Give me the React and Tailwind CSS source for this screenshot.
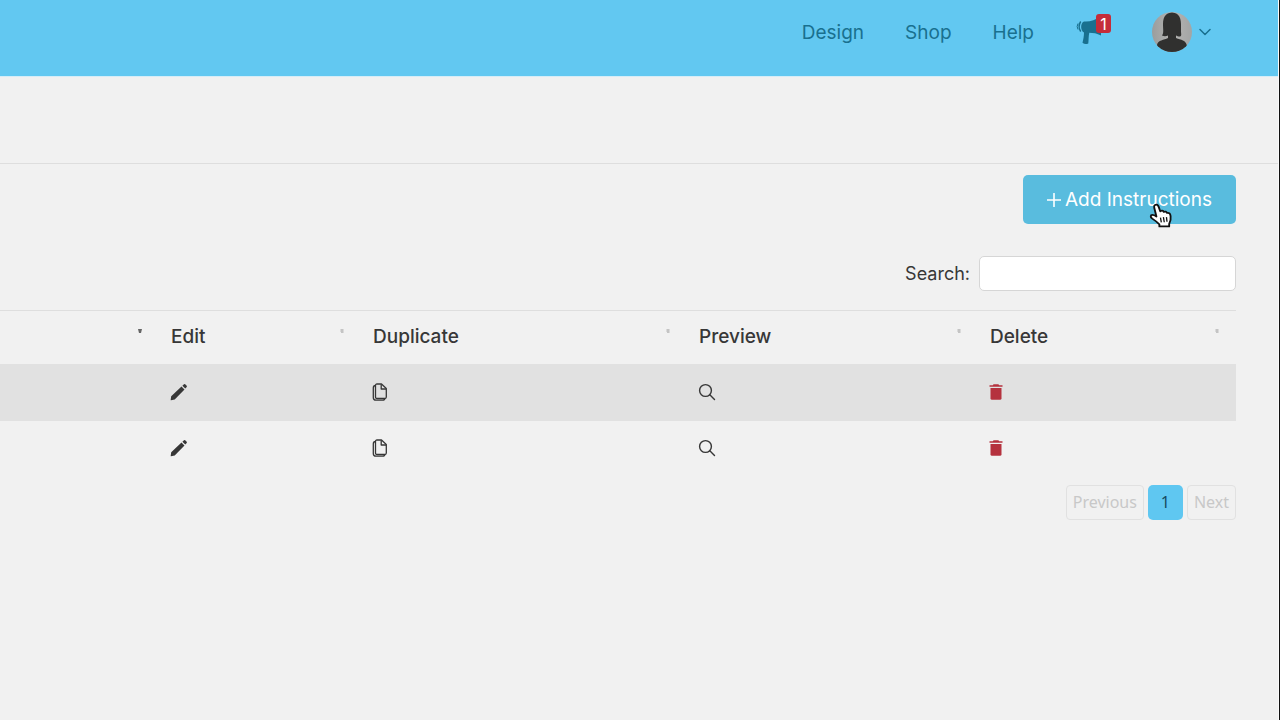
const columns = ["Edit", "Duplicate", "Preview", "Delete"];

function Megaphone() {
  return (
    <svg viewBox="0 0 30 30" className="h-[30px] w-[30px]" fill="#19708f" aria-hidden="true">
      <path d="M8 5.500C13.500 6 19 4.500 25 0V19.500C21 17.500 17 16.800 13.300 16.800C12.500 20 12.700 24 12.300 27.500Q9 29 6.500 26.800C7.300 23.500 8 20 8 16.500C4.500 15 4 7 8 5.500Z" />
      <path d="M4.700 5.500Q1.500 10.500 4.700 15.500" fill="none" stroke="#19708f" strokeWidth="1.500" />
      <path d="M2 7.500Q0.300 10.500 2 13.500" fill="none" stroke="#19708f" strokeWidth="1" />
    </svg>
  );
}

function Avatar() {
  return (
    <svg viewBox="0 0 40 40" className="size-10 rounded-full" aria-hidden="true">
      <defs>
        <linearGradient id="avatar-bg" x1="0" y1="0" x2="1" y2="0">
          <stop offset="0" stopColor="#9a9d9d" />
          <stop offset="0.500" stopColor="#b5b4b2" />
          <stop offset="1" stopColor="#a3a5a5" />
        </linearGradient>
      </defs>
      <rect width="40" height="40" fill="url(#avatar-bg)" />
      <path
        d="M11 12C11 4 15 .5 20 .5S29 4 29 12V19C29 22 30 24 28 24.500C26 24.500 25 24 24 23.500V26C29 28 34 28 35 34L35 40H5V33C6 28 12 28 16 26V23.500C14 24.500 12 24.500 10 23.500C12 21 11 18 11 12Z"
        fill="#30302f"
      />
    </svg>
  );
}

function PencilIcon() {
  return (
    <svg viewBox="0 0 18 18" className="size-[18px]" fill="currentColor" aria-hidden="true">
      <path d="M1.200 13.200L11.500 3.500L14.500 6.500L4.700 16.500L1 17.200Q.6 17.200 .7 16.700Z" />
      <path d="M12.400 2.700L14 1.200Q14.600 .8 15.200 1.300L16.700 2.800Q17.200 3.400 16.700 4L15.300 5.600Z" />
    </svg>
  );
}

function TrashIcon() {
  return (
    <svg viewBox="0 0 14 18" className="h-[18px] w-[14px]" fill="currentColor" aria-hidden="true">
      <path d="M.5 2.300H3.800L4.600 1.300H9.400L10.200 2.300H13.500V3.700H.5Z" />
      <path d="M1.500 5H12.500V15.300Q12.500 16.800 11 16.800H3Q1.500 16.800 1.500 15.300Z" />
    </svg>
  );
}

function CopyIcon() {
  return (
    <svg viewBox="0 0 16 18" className="h-[18px] w-4" fill="none" stroke="currentColor" strokeWidth="1.300" strokeLinejoin="round" aria-hidden="true">
      <path d="M5 1H9.500L14.300 5.500V14Q14.300 15.500 12.800 15.500H5Q3.500 15.500 3.500 14V2.500Q3.500 1 5 1Z" />
      <path d="M9.200 1.200V6H14" />
      <path d="M3.500 2.500Q1.300 2.500 1.300 5V14.500Q1.300 17.200 4 17.200H10.500Q12.800 17.200 12.800 15.500" />
    </svg>
  );
}

function SearchIcon() {
  return (
    <svg viewBox="0 0 18 18" className="size-[18px]" fill="none" stroke="currentColor" strokeWidth="1.400" strokeLinecap="round" aria-hidden="true">
      <circle cx="7.500" cy="7.500" r="5.900" />
      <path d="M11.800 11.800L16.500 16.500" />
    </svg>
  );
}

function HandCursor() {
  return (
    <svg viewBox="0 0 22 24" preserveAspectRatio="none" className="pointer-events-none absolute top-[39px] right-[63px] h-[25px] w-6" aria-hidden="true">
      <path
        d="M5.500 2C7 1 8.300 2 8.800 3.500L10.300 8C11.500 7 13 7.300 13.500 8.500C15 7.800 16 8.300 16.500 9.500C18.500 9 19.500 10.500 19.800 12.500C20.300 16 19.500 18 18.500 20V22.500H9.500V20.500C7.500 18.500 6 17 3 15C1 13.500 1.300 11.500 3 11.500C4.500 11.500 5.500 12 6.800 13L4.800 4.500C4.500 3.300 4.700 2.500 5.500 2Z"
        fill="#fff"
        stroke="#111"
        strokeWidth="1.700"
        strokeLinejoin="round"
      />
      <path d="M10.500 14L11.300 18.500M13.200 13.500L14 18.500M16 13.500L16.500 18" stroke="#111" strokeWidth="1.200" />
    </svg>
  );
}

function SortMark({ active }) {
  return (
    <svg viewBox="0 0 4 6" className="mb-3 h-[6px] w-1" aria-hidden="true">
      {active ? <path d="M0 1H4L3 5H1Z" fill="#666" /> : <path d="M.5 1H3.500V5H1V4H.5Z" fill="#c4c4c4" />}
    </svg>
  );
}

function HeaderCell({ label, active }) {
  return (
    <th scope="col" className="h-[53px] pr-[17px] pl-3 text-left font-medium">
      <div className="flex items-center justify-between">
        <span>{label}</span>
        <SortMark active={active} />
      </div>
    </th>
  );
}

function Row({ shaded }) {
  return (
    <tr className={shaded ? "h-[57px] bg-[#e1e1e1]" : "h-[54px]"}>
      <td />
      <td className="pl-[11px]">
        <button type="button" aria-label="Edit" className="block"><PencilIcon /></button>
      </td>
      <td className="pl-[11px]">
        <button type="button" aria-label="Duplicate" className="block"><CopyIcon /></button>
      </td>
      <td className="pl-[11px]">
        <button type="button" aria-label="Preview" className="block"><SearchIcon /></button>
      </td>
      <td className="pl-[11px]">
        <button type="button" aria-label="Delete" className="block text-[#b5323e]"><TrashIcon /></button>
      </td>
    </tr>
  );
}

export default function App() {
  return (
    <div className="border-r border-[#111]">
      <div className="min-h-screen border-r border-[#fafafa] bg-[#f1f1f1] font-['Inter','Liberation_Sans',sans-serif] text-[19px] leading-7 text-[#373737]">
        <header className="flex h-[77px] items-start justify-end border-b border-[#d5edf8] bg-[#62c8f1] pr-[67px] text-[#19708f]">
          <nav className="flex h-[66px] items-center gap-[41px]">
            <a href="#design">Design</a>
            <a href="#shop">Shop</a>
            <a href="#help">Help</a>
          </nav>
          <button type="button" aria-label="Announcements" className="relative mt-4 ml-[42px]">
            <Megaphone />
            <span className="absolute -top-[2px] left-5 flex h-[19px] w-[15px] items-center justify-center rounded-[3px] bg-[#c52c39] text-base text-white">1</span>
          </button>
          <button type="button" aria-label="Account" className="mt-3 ml-[46px] flex items-center gap-[7px]">
            <Avatar />
            <svg viewBox="0 0 12 8" className="h-2 w-3" fill="none" stroke="#19708f" strokeWidth="1.500" strokeLinecap="round" strokeLinejoin="round" aria-hidden="true">
              <path d="M1 1.500L6 6.500L11 1.500" />
            </svg>
          </button>
        </header>

        <div className="h-[87px] border-b border-[#dedede]" />

        <main className="pr-[42px]">
          <div className="relative flex justify-end pt-[11px]">
            <button type="button" className="flex h-[49px] items-center gap-1 rounded-[5px] bg-[#59bcde] px-6 text-white">
              <svg viewBox="0 0 14 14" className="size-[14px]" stroke="currentColor" strokeWidth="1.600" strokeLinecap="round" aria-hidden="true">
                <path d="M7 .5V13.500M.5 7H13.500" />
              </svg>
              Add Instructions
            </button>
            <HandCursor />
          </div>

          <div className="mt-8 flex items-center justify-end gap-[9px]">
            <label htmlFor="search" className="text-lg">Search:</label>
            <input id="search" type="search" className="h-[35px] w-[257px] rounded-[5px] border border-[#d6d6d6] bg-white px-2 outline-none" />
          </div>

          <table className="mt-[19px] w-full table-fixed border-t border-[#dedede]">
            <colgroup>
              <col className="w-[159px]" />
              <col className="w-[202px]" />
              <col className="w-[326px]" />
              <col className="w-[291px]" />
              <col className="w-[258px]" />
            </colgroup>
            <thead>
              <tr>
                <HeaderCell label="" active />
                {columns.map((label) => (
                  <HeaderCell key={label} label={label} />
                ))}
              </tr>
            </thead>
            <tbody>
              <Row shaded />
              <Row />
            </tbody>
          </table>

          <nav aria-label="Pagination" className="mt-[10px] flex justify-end gap-1 font-['Noto_Sans',sans-serif] text-base">
            <button type="button" disabled className="h-[35px] rounded-[4px] border border-[#e1e1e1] px-[6px] text-[#c8c8c8]">Previous</button>
            <button type="button" aria-current="page" className="h-[35px] w-[35px] rounded-[5px] bg-[#5fc7f1] text-[#174a60]">1</button>
            <button type="button" disabled className="h-[35px] rounded-[4px] border border-[#e1e1e1] px-[6px] text-[#c8c8c8]">Next</button>
          </nav>
        </main>
      </div>
    </div>
  );
}
